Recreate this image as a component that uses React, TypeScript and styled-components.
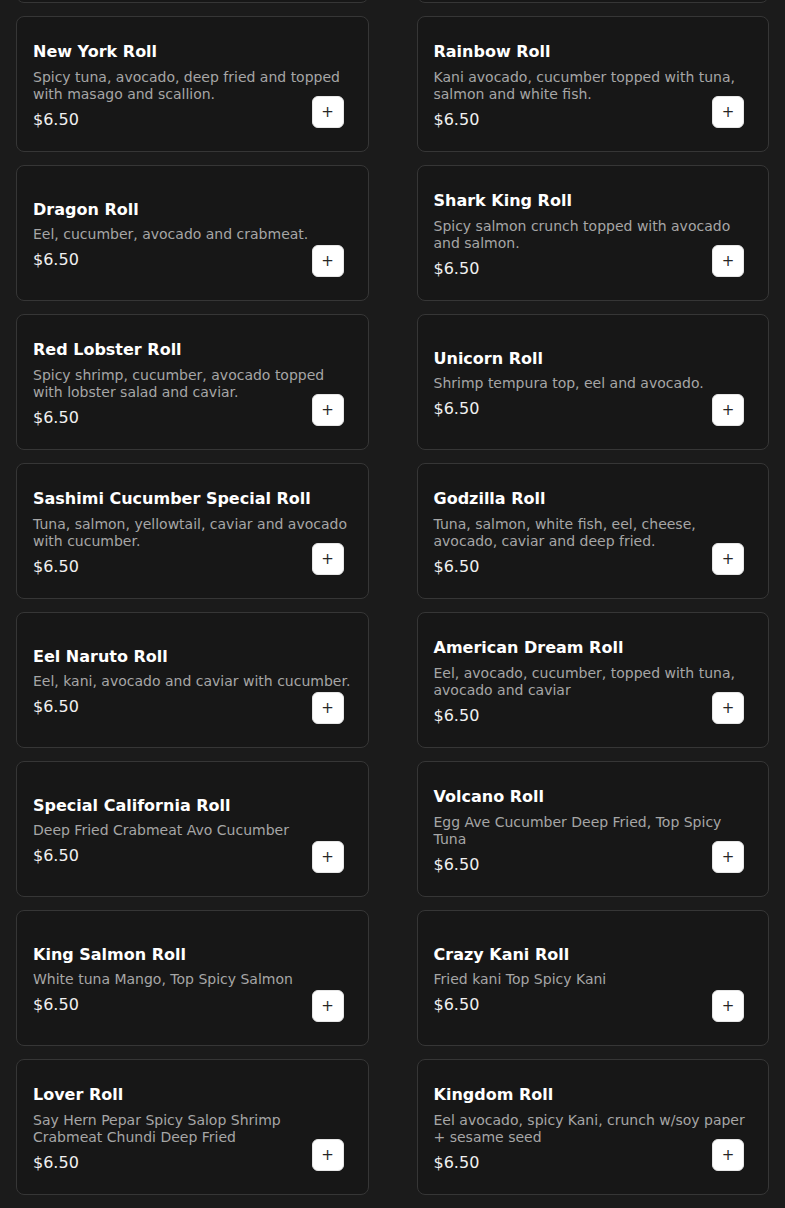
import React from "react";
import styled, { createGlobalStyle } from "styled-components";

const GlobalStyle = createGlobalStyle`
  html, body {
    margin: 0;
    padding: 0;
    background: #1b1b1b;
  }
  body {
    font-family: "DejaVu Sans", "Liberation Sans", sans-serif;
    color: #ffffff;
    overflow: hidden;
  }
  * { box-sizing: border-box; }
`;

const Page = styled.main`
  padding: 0 16px 16px;
  background: #1b1b1b;
  min-height: 1208px;
`;

const Grid = styled.div`
  display: grid;
  grid-template-columns: 1fr 1fr;
  grid-auto-rows: 1fr;
  column-gap: 48px;
  row-gap: 13px;
  margin-top: -133px;
`;

const Card = styled.article`
  position: relative;
  display: flex;
  flex-direction: column;
  justify-content: center;
  padding: 26px 16px 22px;
  background: #171717;
  border: 1px solid #363636;
  border-radius: 8px;
`;

const Title = styled.h3`
  margin: 0 0 7px;
  font-size: 16px;
  font-weight: 700;
  line-height: 18.5px;
  color: #ffffff;
`;

const Description = styled.p`
  margin: 0;
  font-size: 14px;
  line-height: 17px;
  color: #a6a6a6;
`;

const Price = styled.span`
  display: block;
  margin-top: 8px;
  font-size: 16px;
  line-height: 18.5px;
  color: #f0f0f0;
`;

const AddButton = styled.button`
  position: absolute;
  right: 24px;
  bottom: 23px;
  width: 32px;
  height: 32px;
  display: flex;
  align-items: center;
  justify-content: center;
  padding: 0;
  background: #ffffff;
  border: 1px solid #e6e6e6;
  border-radius: 6px;
  color: #262626;
  font-family: "DejaVu Sans", sans-serif;
  font-size: 15px;
  line-height: 1;
  cursor: pointer;
`;

type Item = { name: string; desc: string };

const items: Item[] = [
  { name: "New York Roll", desc: "Spicy tuna, avocado, deep fried and topped with masago and scallion." },
  { name: "Rainbow Roll", desc: "Kani avocado, cucumber topped with tuna, salmon and white fish." },
  { name: "Dragon Roll", desc: "Eel, cucumber, avocado and crabmeat." },
  { name: "Shark King Roll", desc: "Spicy salmon crunch topped with avocado and salmon." },
  { name: "Red Lobster Roll", desc: "Spicy shrimp, cucumber, avocado topped with lobster salad and caviar." },
  { name: "Unicorn Roll", desc: "Shrimp tempura top, eel and avocado." },
  { name: "Sashimi Cucumber Special Roll", desc: "Tuna, salmon, yellowtail, caviar and avocado with cucumber." },
  { name: "Godzilla Roll", desc: "Tuna, salmon, white fish, eel, cheese, avocado, caviar and deep fried." },
  { name: "Eel Naruto Roll", desc: "Eel, kani, avocado and caviar with cucumber." },
  { name: "American Dream Roll", desc: "Eel, avocado, cucumber, topped with tuna, avocado and caviar" },
  { name: "Special California Roll", desc: "Deep Fried Crabmeat Avo Cucumber" },
  { name: "Volcano Roll", desc: "Egg Ave Cucumber Deep Fried, Top Spicy Tuna" },
  { name: "King Salmon Roll", desc: "White tuna Mango, Top Spicy Salmon" },
  { name: "Crazy Kani Roll", desc: "Fried kani Top Spicy Kani" },
  { name: "Lover Roll", desc: "Say Hern Pepar Spicy Salop Shrimp Crabmeat Chundi Deep Fried" },
  { name: "Kingdom Roll", desc: "Eel avocado, spicy Kani, crunch w/soy paper + sesame seed" },
];

function MenuCard({ item }: { item: Item }) {
  return (
    <Card>
      <Title>{item.name}</Title>
      <Description>{item.desc}</Description>
      <Price>$6.50</Price>
      <AddButton aria-label={`Add ${item.name}`}>+</AddButton>
    </Card>
  );
}

export default function App() {
  return (
    <>
      <GlobalStyle />
      <Page>
        <Grid>
          {/* cards of the row above, scrolled out of view */}
          <Card aria-hidden="true" />
          <Card aria-hidden="true" />
          {items.map((item) => (
            <MenuCard key={item.name} item={item} />
          ))}
        </Grid>
      </Page>
    </>
  );
}
